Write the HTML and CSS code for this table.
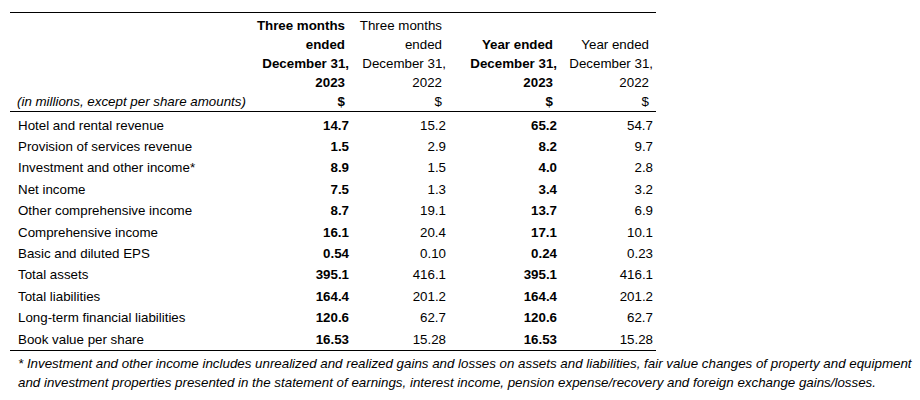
FILE: index.html
```html
<!DOCTYPE html>
<html>
<head>
<meta charset="utf-8">
<link rel="stylesheet" href="styles.css">
</head>
<body>
<div class="page">
  <table class="fin">
    <colgroup>
      <col class="c-label"><col class="c-num"><col class="c-num2"><col class="c-num3"><col class="c-num4">
    </colgroup>
    <thead>
      <tr class="head">
        <th class="label"></th>
        <th class="num b"><span class="ln">Three months</span><span class="ln">ended</span><span class="ln hang">December 31,</span><span class="ln">2023</span></th>
        <th class="num"><span class="ln">Three months</span><span class="ln">ended</span><span class="ln hang">December 31,</span><span class="ln">2022</span></th>
        <th class="num b"><span class="ln">Year ended</span><span class="ln hang">December 31,</span><span class="ln">2023</span></th>
        <th class="num"><span class="ln">Year ended</span><span class="ln hang">December 31,</span><span class="ln">2022</span></th>
      </tr>
      <tr class="units">
        <th class="label units-label">(in millions, except per share amounts)</th>
        <th class="num b"><span class="ln">$</span></th>
        <th class="num"><span class="ln">$</span></th>
        <th class="num b"><span class="ln">$</span></th>
        <th class="num"><span class="ln">$</span></th>
      </tr>
    </thead>
    <tbody>
      <tr class="first"><td class="label">Hotel and rental revenue</td><td class="num b">14.7</td><td class="num">15.2</td><td class="num b">65.2</td><td class="num">54.7</td></tr>
      <tr><td class="label">Provision of services revenue</td><td class="num b">1.5</td><td class="num">2.9</td><td class="num b">8.2</td><td class="num">9.7</td></tr>
      <tr><td class="label">Investment and other income*</td><td class="num b">8.9</td><td class="num">1.5</td><td class="num b">4.0</td><td class="num">2.8</td></tr>
      <tr><td class="label">Net income</td><td class="num b">7.5</td><td class="num">1.3</td><td class="num b">3.4</td><td class="num">3.2</td></tr>
      <tr><td class="label">Other comprehensive income</td><td class="num b">8.7</td><td class="num">19.1</td><td class="num b">13.7</td><td class="num">6.9</td></tr>
      <tr><td class="label">Comprehensive income</td><td class="num b">16.1</td><td class="num">20.4</td><td class="num b">17.1</td><td class="num">10.1</td></tr>
      <tr><td class="label">Basic and diluted EPS</td><td class="num b">0.54</td><td class="num">0.10</td><td class="num b">0.24</td><td class="num">0.23</td></tr>
      <tr><td class="label">Total assets</td><td class="num b">395.1</td><td class="num">416.1</td><td class="num b">395.1</td><td class="num">416.1</td></tr>
      <tr><td class="label">Total liabilities</td><td class="num b">164.4</td><td class="num">201.2</td><td class="num b">164.4</td><td class="num">201.2</td></tr>
      <tr><td class="label">Long-term financial liabilities</td><td class="num b">120.6</td><td class="num">62.7</td><td class="num b">120.6</td><td class="num">62.7</td></tr>
      <tr class="last"><td class="label">Book value per share</td><td class="num b">16.53</td><td class="num">15.28</td><td class="num b">16.53</td><td class="num">15.28</td></tr>
    </tbody>
  </table>
  <p class="note">* Investment and other income includes unrealized and realized gains and losses on assets and liabilities, fair value changes of property and equipment<br>and investment properties presented in the statement of earnings, interest income, pension expense/recovery and foreign exchange gains/losses.</p>
</div>
</body>
</html>
```

FILE: styles.css
```css
html, body {
  margin: 0;
  padding: 0;
  background: #ffffff;
}

body {
  font-family: "Liberation Sans", Arial, sans-serif;
  font-size: 13.33px;
  color: #000000;
}

.page {
  padding: 12px 0 0 10px;
}

.fin {
  border-collapse: collapse;
  width: 646px;
  table-layout: fixed;
  border-top: 1px solid #000;
  border-bottom: 1px solid #000;
}

.c-label { width: 246px; }
.c-num { width: 96px; }
.c-num2 { width: 97px; }
.c-num3 { width: 111px; }
.c-num4 { width: 96px; }

.fin th,
.fin td {
  padding: 0 3px 0 0;
  font-weight: normal;
  vertical-align: bottom;
  white-space: nowrap;
}

.fin .label {
  text-align: left;
  padding-left: 8px;
}

.fin .num {
  text-align: right;
}

.fin .b {
  font-weight: bold;
}

.head th {
  padding-top: 3px;
  line-height: 19px;
}

.ln {
  display: block;
  padding-right: 4px;
}

.ln.hang {
  padding-right: 0;
}

.units th {
  line-height: 19px;
  padding-bottom: 0;
}

.units .units-label {
  font-style: italic;
  padding-left: 7px;
}

.units {
  border-bottom: 1px solid #000;
}

.fin tbody td {
  padding-top: 3px;
  line-height: 18.4px;
}

.fin tbody .first td {
  padding-top: 4.5px;
}

.fin tbody .last td {
  padding-bottom: 1px;
}

.note {
  margin: 3px 0 0 8px;
  font-style: italic;
  line-height: 19px;
  white-space: nowrap;
}
```
